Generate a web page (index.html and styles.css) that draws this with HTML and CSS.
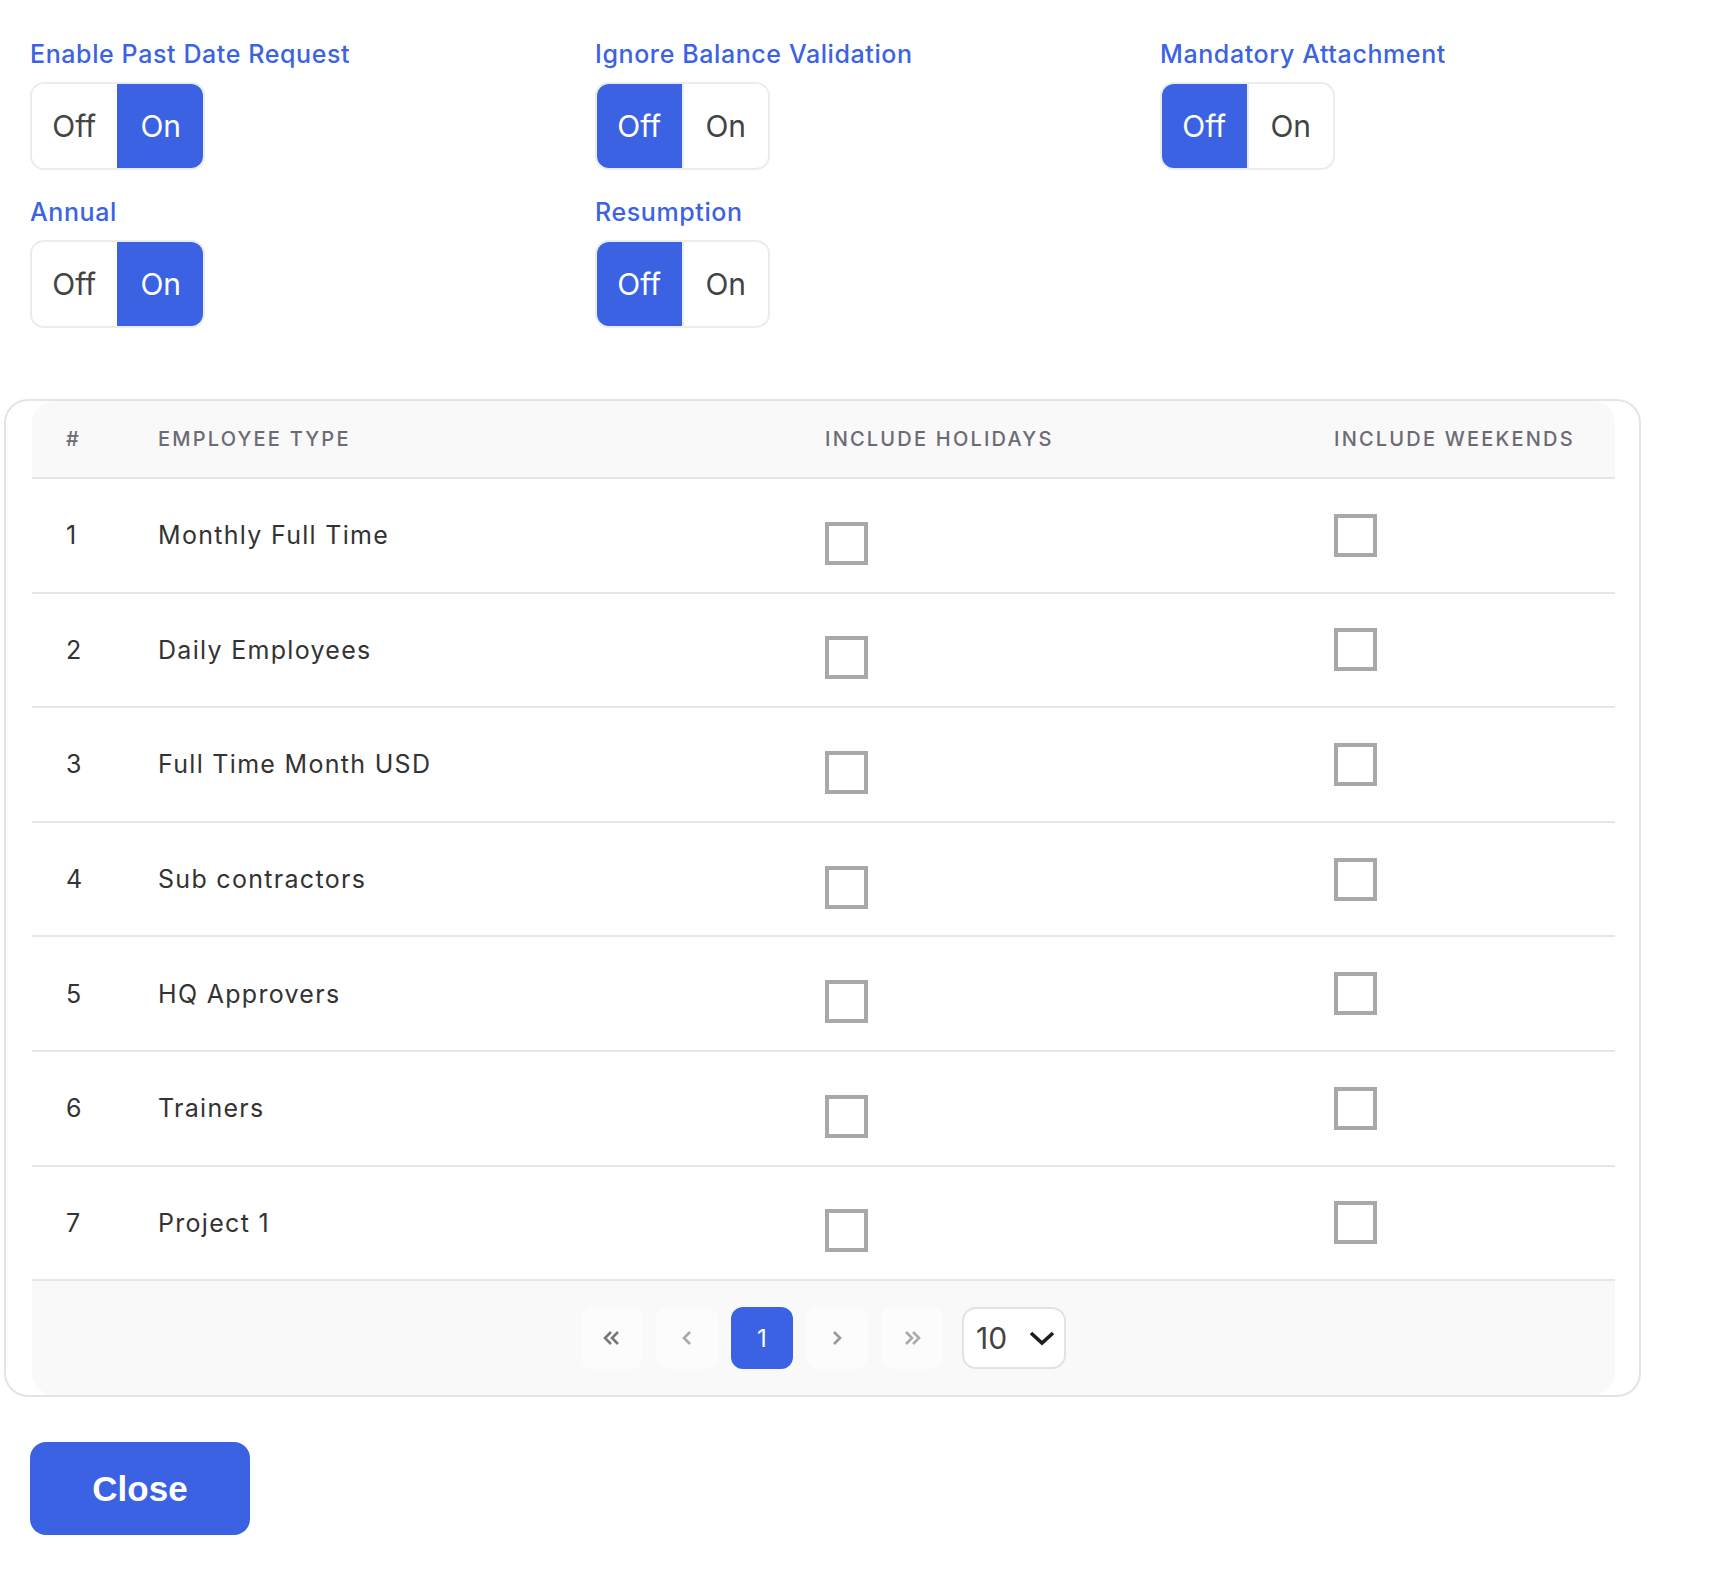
FILE: index.html
```html
<!DOCTYPE html>
<html lang="en">
<head>
  <meta charset="UTF-8">
  <title>Leave Type Settings</title>
  <link rel="stylesheet" href="styles.css">
</head>
<body>

  <div class="settings">
    <div class="field">
      <div class="field-label">Enable Past Date Request</div>
      <div class="toggle"><span class="seg">Off</span><span class="seg active">On</span></div>
    </div>
    <div class="field">
      <div class="field-label">Ignore Balance Validation</div>
      <div class="toggle"><span class="seg active">Off</span><span class="seg">On</span></div>
    </div>
    <div class="field">
      <div class="field-label">Mandatory Attachment</div>
      <div class="toggle"><span class="seg active">Off</span><span class="seg">On</span></div>
    </div>
    <div class="field">
      <div class="field-label">Annual</div>
      <div class="toggle"><span class="seg">Off</span><span class="seg active">On</span></div>
    </div>
    <div class="field">
      <div class="field-label">Resumption</div>
      <div class="toggle"><span class="seg active">Off</span><span class="seg">On</span></div>
    </div>
  </div>

  <div class="card">
    <div class="table-wrap">
      <table class="types">
        <colgroup>
          <col class="c-num">
          <col class="c-type">
          <col class="c-hol">
          <col class="c-wkd">
        </colgroup>
        <thead>
          <tr>
            <th>#</th>
            <th>EMPLOYEE TYPE</th>
            <th>INCLUDE HOLIDAYS</th>
            <th>INCLUDE WEEKENDS</th>
          </tr>
        </thead>
        <tbody>
          <tr>
            <td>1</td>
            <td>Monthly Full Time</td>
            <td><span class="check low"></span></td>
            <td><span class="check"></span></td>
          </tr>
          <tr>
            <td>2</td>
            <td>Daily Employees</td>
            <td><span class="check low"></span></td>
            <td><span class="check"></span></td>
          </tr>
          <tr>
            <td>3</td>
            <td>Full Time Month USD</td>
            <td><span class="check low"></span></td>
            <td><span class="check"></span></td>
          </tr>
          <tr>
            <td>4</td>
            <td>Sub contractors</td>
            <td><span class="check low"></span></td>
            <td><span class="check"></span></td>
          </tr>
          <tr>
            <td>5</td>
            <td>HQ Approvers</td>
            <td><span class="check low"></span></td>
            <td><span class="check"></span></td>
          </tr>
          <tr>
            <td>6</td>
            <td>Trainers</td>
            <td><span class="check low"></span></td>
            <td><span class="check"></span></td>
          </tr>
          <tr>
            <td>7</td>
            <td>Project 1</td>
            <td><span class="check low"></span></td>
            <td><span class="check"></span></td>
          </tr>
        </tbody>
      </table>

      <div class="pager">
        <span class="page-btn dark">
          <svg width="22" height="18" viewBox="0 0 22 18"><path d="M10 3 L4 9 L10 15 M17 3 L11 9 L17 15" fill="none" stroke="currentColor" stroke-width="2.6"/></svg>
        </span>
        <span class="page-btn">
          <svg width="12" height="18" viewBox="0 0 12 18"><path d="M9 3 L3 9 L9 15" fill="none" stroke="currentColor" stroke-width="2.6"/></svg>
        </span>
        <span class="page-btn current">1</span>
        <span class="page-btn mid">
          <svg width="12" height="18" viewBox="0 0 12 18"><path d="M3 3 L9 9 L3 15" fill="none" stroke="currentColor" stroke-width="2.6"/></svg>
        </span>
        <span class="page-btn">
          <svg width="22" height="18" viewBox="0 0 22 18"><path d="M5 3 L11 9 L5 15 M12 3 L18 9 L12 15" fill="none" stroke="currentColor" stroke-width="2.6"/></svg>
        </span>
        <span class="page-size">
          10
          <svg width="28" height="18" viewBox="0 0 28 18"><path d="M3 4 L14 14 L25 4" fill="none" stroke="currentColor" stroke-width="3.6"/></svg>
        </span>
      </div>
    </div>
  </div>

  <button class="close-btn">Close</button>

</body>
</html>
```

FILE: styles.css
```css
body {
  margin: 0;
  font-family: Inter, "Open Sans", sans-serif;
  color: #333;
  background: #fff;
}

.settings {
  display: grid;
  grid-template-columns: repeat(3, 565px);
  padding: 39px 0 0 30px;
  margin-bottom: 44px;
}
.field {
  margin-bottom: 27px;
}
.field-label {
  font-size: 25px;
  line-height: 30px;
  font-weight: 500;
  color: #3b63e3;
  margin-bottom: 13px;
  letter-spacing: 0.6px;
}
.toggle {
  display: inline-flex;
  width: 175px;
  height: 88px;
  box-sizing: border-box;
  border: 2px solid #ececec;
  border-radius: 14px;
  overflow: hidden;
}
.seg {
  flex: 1;
  display: flex;
  align-items: center;
  justify-content: center;
  font-size: 30px;
  color: #444;
}
.seg + .seg {
  border-left: 2px solid #ececec;
}
.seg.active {
  background: #3a62e2;
  color: #fff;
  border-color: #3a62e2;
}

.card {
  margin-left: 4px;
  width: 1637px;
  box-sizing: border-box;
  border: 2px solid #e4e4e4;
  border-radius: 24px;
  padding: 0 24px 0 26px;
}
.table-wrap {
  background: #fff;
  border-radius: 22px;
  overflow: hidden;
}
.types {
  width: 100%;
  table-layout: fixed;
  border-collapse: separate;
  border-spacing: 0;
}
.c-num { width: 92px; }
.c-type { width: 667px; }
.c-hol { width: 509px; }
.c-wkd { width: 315px; }

.types th {
  background: #f9f9f9;
  height: 78px;
  box-sizing: border-box;
  padding: 0 0 0 34px;
  border-bottom: 2px solid #e6e6e6;
  text-align: left;
  font-size: 20px;
  font-weight: 500;
  color: #6b6b75;
  letter-spacing: 2.2px;
}
.types td {
  height: 114.6px;
  box-sizing: border-box;
  padding: 0 0 0 34px;
  border-bottom: 2px solid #e6e6e6;
  font-size: 25px;
  color: #333;
  letter-spacing: 1.3px;
}
.check {
  display: block;
  width: 43px;
  height: 43px;
  box-sizing: border-box;
  border: 4px solid #aaa7a7;
  background: #fff;
}
.check.low {
  margin-top: 16px;
}

.pager {
  height: 114px;
  background: #f9f9f9;
  display: flex;
  align-items: center;
  justify-content: center;
  gap: 13px;
}
.page-btn {
  width: 62px;
  height: 62px;
  border-radius: 12px;
  background: #fcfcfc;
  display: flex;
  align-items: center;
  justify-content: center;
  color: #aaa;
  font-size: 24px;
}
.page-btn.dark {
  color: #777;
}
.page-btn.mid {
  color: #999;
}
.page-btn.current {
  background: #3a62e2;
  color: #fff;
}
.page-size {
  margin-left: 6px;
  width: 104px;
  height: 62px;
  box-sizing: border-box;
  border: 2px solid #e2e2e2;
  border-radius: 14px;
  background: #fff;
  display: flex;
  align-items: center;
  justify-content: space-between;
  padding: 0 8px 0 12px;
  font-size: 30px;
  color: #444;
}
.page-size svg {
  color: #1e1e1e;
}

.close-btn {
  display: block;
  margin: 45px 0 0 30px;
  width: 220px;
  height: 93px;
  border: none;
  border-radius: 16px;
  background: #3a62e2;
  color: #fff;
  font-family: "Liberation Sans", Arial, sans-serif;
  font-size: 35px;
  font-weight: bold;
}
```
